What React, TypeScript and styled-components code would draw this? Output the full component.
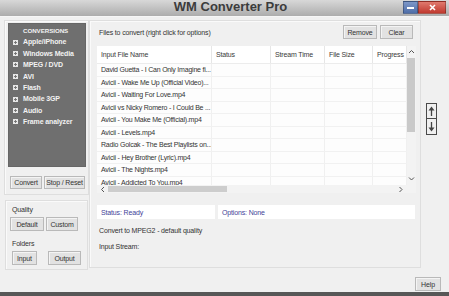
import React from "react";
import styled, { createGlobalStyle } from "styled-components";

const Global = createGlobalStyle`
  html, body { margin: 0; padding: 0; background: #f0f0f0; }
  body { font-family: "Liberation Sans", Arial, sans-serif; }
  * { box-sizing: border-box; }
`;

const Window = styled.div`
  width: 449px;
  height: 296px;
  display: flex;
  flex-direction: column;
  background: #f0f0f0;
  overflow: hidden;
  color: #333;
  font-size: 7px;
  letter-spacing: -0.15px;
`;

const TitleBar = styled.div`
  height: 17px;
  flex: none;
  display: flex;
  align-items: flex-start;
  background: linear-gradient(#d8d8d8, #adadad 92%, #f6f6f6 94%);
`;

const Title = styled.div`
  flex: 1;
  padding-left: 58px;
  text-align: center;
  font-size: 13px;
  font-weight: bold;
  letter-spacing: 0;
  line-height: 14px;
  color: #3c3c3c;
`;

const WinButtons = styled.div`
  display: flex;
  padding: 1px 3px 0 0;
`;

const WinBtn = styled.div<{ $w: number; $bg: string }>`
  width: ${(p) => p.$w}px;
  height: 13px;
  background: ${(p) => p.$bg};
  border: 1px solid rgba(0, 0, 0, 0.25);
  display: flex;
  align-items: center;
  justify-content: center;
`;

const Body = styled.div`
  flex: 1;
  display: flex;
  padding: 3px 0 0 4px;
  min-height: 0;
`;

const LeftCol = styled.div`
  width: 85px;
  display: flex;
  flex-direction: column;
  gap: 5px;
`;

const Group = styled.div`
  border: 1px solid #dedede;
  box-shadow: inset 1px 1px 0 #fafafa;
`;

const ConvGroup = styled(Group)`
  height: 175px;
  padding: 2px 2px 0 3px;
`;

const DarkPanel = styled.div`
  height: 144px;
  background: #6f6f6f;
  border: 1px solid #666;
  padding: 1px 0 0 4px;
  color: #f2f2f2;
`;

const PanelHead = styled.div`
  font-size: 6.2px;
  font-weight: bold;
  letter-spacing: -0.05px;
  line-height: 11.4px;
  padding-left: 10px;
`;

const PanelItem = styled.div`
  display: flex;
  align-items: center;
  gap: 5px;
  font-weight: bold;
  font-size: 7px;
  letter-spacing: -0.12px;
  line-height: 11.4px;
  white-space: nowrap;
`;

const BtnRow = styled.div<{ $pl: number; $gap: number; $mt: number }>`
  display: flex;
  gap: ${(p) => p.$gap}px;
  padding-left: ${(p) => p.$pl}px;
  margin-top: ${(p) => p.$mt}px;
`;

const Button = styled.div<{ $w: number; $h?: number }>`
  width: ${(p) => p.$w}px;
  height: ${(p) => p.$h ?? 14}px;
  background: #e2e2e2;
  border: 1px solid #b9b9b9;
  box-shadow: inset 1px 1px 0 #f4f4f4;
  display: flex;
  align-items: center;
  justify-content: center;
  color: #333;
  white-space: nowrap;
`;

const QualGroup = styled(Group)`
  height: 70px;
  margin-left: 1px;
  margin-right: 1px;
  padding: 4px 0 0 0;
`;

const Label = styled.div<{ $mt?: number }>`
  padding-left: 6px;
  line-height: 9px;
  margin-top: ${(p) => p.$mt ?? 0}px;
`;

const MainGroup = styled(Group)`
  width: 332px;
  height: 248px;
  padding: 4px 4px 0 7px;
  display: flex;
  flex-direction: column;
`;

const HeadRow = styled.div`
  display: flex;
  align-items: center;
  height: 14px;
  padding: 0 3px 0 2px;
  gap: 3px;
`;

const HeadText = styled.div`
  flex: 1;
`;

const Table = styled.div`
  margin-top: 7px;
  height: 147px;
  display: grid;
  grid-template-columns: 1fr 9px;
  grid-template-rows: 139px 8px;
  background: #fdfdfd;
`;

const List = styled.div`
  overflow: hidden;
  display: flex;
  flex-direction: column;
`;

const Cols = "115px 59px 54px 48px 34px";

const HeaderRow = styled.div`
  display: grid;
  grid-template-columns: ${Cols};
  height: 18px;
  flex: none;
  background: #fff;
  border-bottom: 1px solid #ececec;
`;

const HeaderCell = styled.div`
  padding-left: 4px;
  display: flex;
  align-items: center;
  border-right: 1px solid #e6e6e6;
  white-space: nowrap;
  overflow: hidden;
  color: #3a3a3a;
`;

const Row = styled.div`
  display: grid;
  grid-template-columns: ${Cols};
  height: 12.5px;
  flex: none;
  border-bottom: 1px solid #f1f1f1;
`;

const Cell = styled.div`
  padding-left: 4px;
  display: flex;
  align-items: center;
  border-right: 1px solid #f0f0f0;
  white-space: nowrap;
  overflow: hidden;
  color: #333;
  letter-spacing: -0.22px;
`;

const VScroll = styled.div`
  background: #f3f3f3;
  position: relative;
  display: flex;
  flex-direction: column;
  align-items: center;
`;

const VThumb = styled.div`
  position: absolute;
  left: 0;
  top: 12px;
  width: 8px;
  height: 74px;
  background: #c9c9c9;
`;

const ScrollEnd = styled.div<{ $end?: boolean }>`
  margin-top: ${(p) => (p.$end ? "auto" : "3px")};
  margin-bottom: ${(p) => (p.$end ? "3px" : "0")};
  display: flex;
`;

const HScroll = styled.div`
  background: #f3f3f3;
  position: relative;
  display: flex;
  align-items: center;
  justify-content: space-between;
  padding: 0 3px;
`;

const HThumb = styled.div`
  position: absolute;
  left: 11px;
  top: 1px;
  width: 119px;
  height: 6px;
  background: #cdcdcd;
`;

const Corner = styled.div`
  background: #f3f3f3;
`;

const StatusRow = styled.div`
  display: flex;
  gap: 3px;
  margin-top: 12px;
  margin-right: 1px;
  height: 14px;
`;

const StatusBox = styled.div<{ $w?: number }>`
  ${(p) => (p.$w ? `width: ${p.$w}px;` : "flex: 1;")}
  background: #fff;
  color: #3f3f98;
  display: flex;
  align-items: center;
  padding-left: 4px;
`;

const InfoLine = styled.div<{ $mt: number }>`
  padding-left: 2px;
  margin-top: ${(p) => p.$mt}px;
  line-height: 10px;
`;

const SideCol = styled.div`
  width: 28px;
  padding: 83px 0 0 5px;
  display: flex;
  flex-direction: column;
`;

const ArrowBtn = styled.div<{ $h: number; $mt?: number }>`
  width: 11px;
  height: ${(p) => p.$h}px;
  margin-top: ${(p) => p.$mt ?? 0}px;
  border: 1px solid #4a4a4a;
  background: #f0f0f0;
  display: flex;
  align-items: center;
  justify-content: center;
`;

const Footer = styled.div`
  height: 20px;
  flex: none;
  display: flex;
  justify-content: flex-end;
  padding: 5px 8px 0 0;
`;

const BottomBand = styled.div`
  height: 4px;
  flex: none;
  background: #575757;
`;

const PlusBox = () => (
  <svg width="5" height="5" viewBox="0 0 5 5">
    <rect x="0" y="0" width="5" height="5" fill="#e8e8e8" />
    <path d="M2.5 1v3M1 2.5h3" stroke="#6f6f6f" strokeWidth="0.9" />
  </svg>
);

const Chevron = ({ dir }: { dir: "up" | "down" | "left" | "right" }) => {
  const d = {
    up: "M1 4 L3.5 1.5 L6 4",
    down: "M1 1.5 L3.5 4 L6 1.5",
    left: "M4 1 L1.5 3.5 L4 6",
    right: "M1.5 1 L4 3.5 L1.5 6",
  }[dir];
  const vert = dir === "up" || dir === "down";
  return (
    <svg width={vert ? 7 : 6} height={vert ? 6 : 7} viewBox={vert ? "0 0 7 6" : "0 0 6 7"}>
      <path d={d} fill="none" stroke="#555" strokeWidth="1" />
    </svg>
  );
};

const Arrow = ({ up }: { up: boolean }) => (
  <svg width="7" height="10" viewBox="0 0 7 10">
    {up ? (
      <>
        <path d="M3.5 3v7" stroke="#444" strokeWidth="1.3" />
        <path d="M0.5 4.5 L3.5 0.5 L6.5 4.5 Z" fill="#444" />
      </>
    ) : (
      <>
        <path d="M3.5 0v7" stroke="#444" strokeWidth="1.3" />
        <path d="M0.5 5.5 L3.5 9.5 L6.5 5.5 Z" fill="#444" />
      </>
    )}
  </svg>
);

const items = [
  "Apple/iPhone",
  "Windows Media",
  "MPEG / DVD",
  "AVI",
  "Flash",
  "Mobile 3GP",
  "Audio",
  "Frame analyzer",
];

const files = [
  "David Guetta - I Can Only Imagine fi...",
  "Avicii - Wake Me Up (Official Video)...",
  "Avicii - Waiting For Love.mp4",
  "Avicii vs Nicky Romero - I Could Be ...",
  "Avicii - You Make Me (Official).mp4",
  "Avicii - Levels.mp4",
  "Radio Golcak - The Best Playlists on...",
  "Avicii - Hey Brother (Lyric).mp4",
  "Avicii - The Nights.mp4",
  "Avicii - Addicted To You.mp4",
];

export default function App() {
  return (
    <Window>
      <Global />
      <TitleBar>
        <Title>WM Converter Pro</Title>
        <WinButtons>
          <WinBtn $w={15} $bg="linear-gradient(#7d97c8, #4f6ea8)">
            <svg width="7" height="3" viewBox="0 0 7 3">
              <rect width="7" height="2" y="1" fill="#fff" />
            </svg>
          </WinBtn>
          <WinBtn $w={28} $bg="linear-gradient(#e07a6e, #c0392f)">
            <svg width="7" height="7" viewBox="0 0 7 7">
              <path d="M1 1 L6 6 M6 1 L1 6" stroke="#fff" strokeWidth="1.6" />
            </svg>
          </WinBtn>
        </WinButtons>
      </TitleBar>

      <Body>
        <LeftCol>
          <ConvGroup>
            <DarkPanel>
              <PanelHead>CONVERSIONS</PanelHead>
              {items.map((t) => (
                <PanelItem key={t}>
                  <PlusBox />
                  {t}
                </PanelItem>
              ))}
            </DarkPanel>
            <BtnRow $pl={2} $gap={2} $mt={9}>
              <Button $w={32} $h={13}>Convert</Button>
              <Button $w={41} $h={13}>Stop / Reset</Button>
            </BtnRow>
          </ConvGroup>
          <QualGroup>
            <Label>Quality</Label>
            <BtnRow $pl={4} $gap={2} $mt={3}>
              <Button $w={34}>Default</Button>
              <Button $w={32}>Custom</Button>
            </BtnRow>
            <Label $mt={8}>Folders</Label>
            <BtnRow $pl={6} $gap={11} $mt={3}>
              <Button $w={25}>Input</Button>
              <Button $w={33}>Output</Button>
            </BtnRow>
          </QualGroup>
        </LeftCol>

        <MainGroup>
          <HeadRow>
            <HeadText>Files to convert (right click for options)</HeadText>
            <Button $w={34}>Remove</Button>
            <Button $w={33}>Clear</Button>
          </HeadRow>
          <Table>
            <List>
              <HeaderRow>
                <HeaderCell>Input File Name</HeaderCell>
                <HeaderCell>Status</HeaderCell>
                <HeaderCell>Stream Time</HeaderCell>
                <HeaderCell>File Size</HeaderCell>
                <HeaderCell>Progress</HeaderCell>
              </HeaderRow>
              {files.map((f) => (
                <Row key={f}>
                  <Cell>{f}</Cell>
                  <Cell />
                  <Cell />
                  <Cell />
                  <Cell />
                </Row>
              ))}
            </List>
            <VScroll>
              <ScrollEnd>
                <Chevron dir="up" />
              </ScrollEnd>
              <VThumb />
              <ScrollEnd $end>
                <Chevron dir="down" />
              </ScrollEnd>
            </VScroll>
            <HScroll>
              <Chevron dir="left" />
              <HThumb />
              <Chevron dir="right" />
            </HScroll>
            <Corner />
          </Table>
          <StatusRow>
            <StatusBox $w={118}>Status: Ready</StatusBox>
            <StatusBox>Options: None</StatusBox>
          </StatusRow>
          <InfoLine $mt={7}>Convert to MPEG2 - default quality</InfoLine>
          <InfoLine $mt={6}>Input Stream:</InfoLine>
        </MainGroup>

        <SideCol>
          <ArrowBtn $h={16}>
            <Arrow up />
          </ArrowBtn>
          <ArrowBtn $h={17} $mt={-1}>
            <Arrow up={false} />
          </ArrowBtn>
        </SideCol>
      </Body>

      <Footer>
        <Button $w={26}>Help</Button>
      </Footer>
      <BottomBand />
    </Window>
  );
}
